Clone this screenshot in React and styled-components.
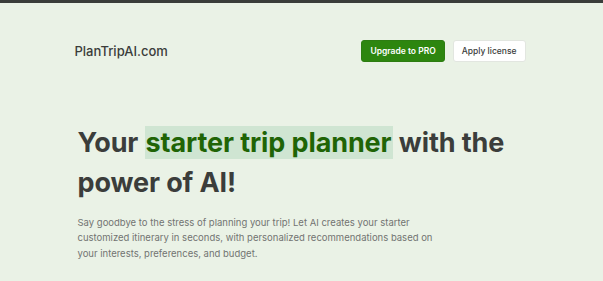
import styled, { createGlobalStyle } from "styled-components"

const GlobalStyle = createGlobalStyle`
    html, body {
        margin: 0;
        padding: 0;
        background: #eaf2e6;
    }
    body {
        font-family: Inter, "Noto Sans", sans-serif;
        color: #3b3d3b;
    }
`

const Page = styled.div`
    min-height: 281px;
    border-top: 3px solid #3a3d3a;
    background: #eaf2e6;
`

const Container = styled.div`
    width: 448px;
    margin: 0 auto;
`

const Header = styled.header`
    display: flex;
    align-items: center;
    justify-content: space-between;
    height: 78px;
    margin-top: 9px;
`

const Logo = styled.div`
    font-size: 13px;
    font-weight: 500;
    color: #3b3d3b;
    margin-left: -3px;
`

const Actions = styled.div`
    display: flex;
    gap: 8px;
`

const Button = styled.button`
    font-family: Inter, sans-serif;
    font-size: 8.5px;
    height: 22px;
    padding: 0 8px;
    border-radius: 3px;
    cursor: pointer;
    border: 1px solid ${p => (p.$primary ? "#2d7d12" : "#e2e6e0")};
    background: ${p => (p.$primary ? "#2d860f" : "#ffffff")};
    color: ${p => (p.$primary ? "#ffffff" : "#3b3d3b")};
    font-weight: ${p => (p.$primary ? 600 : 500)};
`

const Hero = styled.section`
    padding-top: 33px;
`

const Title = styled.h1`
    margin: 0;
    font-size: 27px;
    line-height: 40px;
    font-weight: 700;
    color: #3b3d3b;
    letter-spacing: -0.1px;
`

const Highlight = styled.span`
    color: #1f6406;
    background: #cfe5d2;
    padding: 0 1px;
`

const Lead = styled.p`
    margin: 12px 0 0;
    width: 362px;
    font-size: 9.5px;
    line-height: 15.3px;
    color: #727472;
`

export default function App() {
    return (
        <>
            <GlobalStyle />
            <Page>
                <Container>
                    <Header>
                        <Logo>PlanTripAI.com</Logo>
                        <Actions>
                            <Button $primary>Upgrade to PRO</Button>
                            <Button>Apply license</Button>
                        </Actions>
                    </Header>
                    <Hero>
                        <Title>
                            Your <Highlight>starter trip planner</Highlight> with the power of AI!
                        </Title>
                        <Lead>
                            Say goodbye to the stress of planning your trip! Let AI creates your starter
                            customized itinerary in seconds, with personalized recommendations based on
                            your interests, preferences, and budget.
                        </Lead>
                    </Hero>
                </Container>
            </Page>
        </>
    )
}
